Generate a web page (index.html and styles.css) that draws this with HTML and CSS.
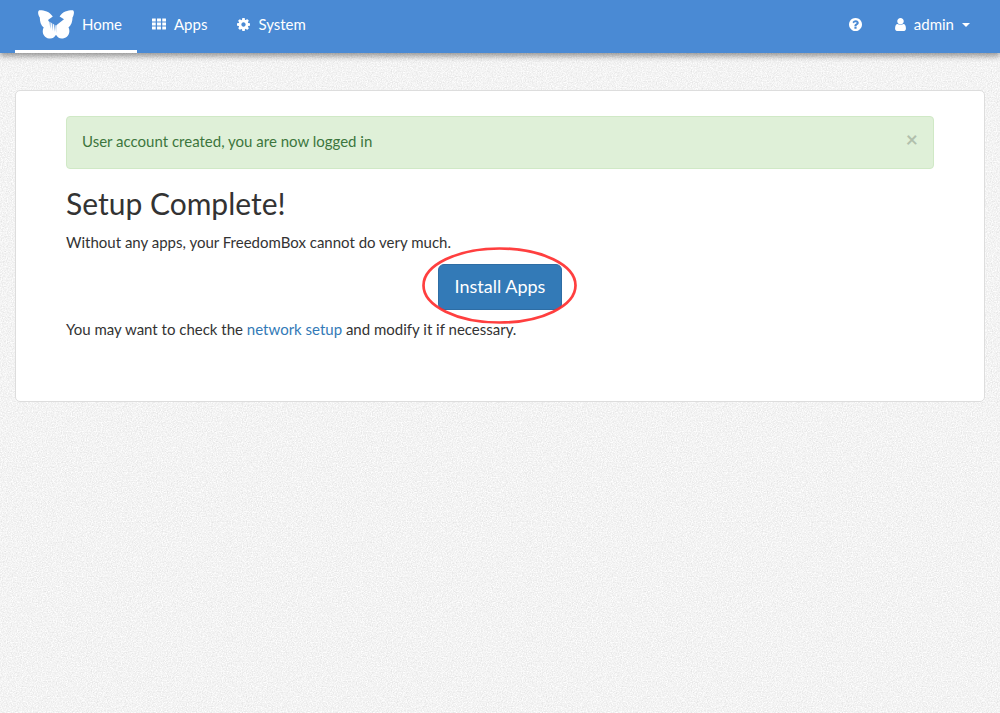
FILE: index.html
```html
<!DOCTYPE html>
<html lang="en">
<head>
<meta charset="utf-8">
<meta name="viewport" content="width=device-width, initial-scale=1">
<title>Setup Complete! - FreedomBox</title>
<link rel="stylesheet" href="styles.css">
</head>
<body>
<nav class="navbar">
  <div class="nav-group">
    <a class="nav-link brand active" href="#">
      <svg class="logo" viewBox="0 0 36 29" aria-hidden="true">
        <path fill="#fff" d="M1.200 .2C5 0 11.500 1 14.800 6.600L10.300 9.800L10.300 11L18 15.500L26 9.300L21.600 6.600C24.500 1 31 0 35 .2C36.800 1.500 35.700 5.500 34.500 7.600C34.400 11.500 33.400 15.500 30.500 17.300C32.600 21.500 31 27.500 25 28.500C21.500 29 19.500 27.400 18 24.800C16.500 27.400 14.500 29 11 28.500C5 27.500 3.500 21.500 5.700 17.300C2.700 15.500 2 11.500 1.800 7.600C.3 5.500-.8 1.500 1.200 .2Z"/>
        <path fill="#4a8ad4" d="M11.400 10.500h1.100L12.300 19zM13.600 11.500h1.100L14.500 21zM15.700 12.500h1.100L16.500 22zM17.500 14h.8L18.100 23z"/>
      </svg>
      <span>Home</span>
    </a>
    <a class="nav-link" href="#">
      <svg class="icon-th" viewBox="0 0 15 12" aria-hidden="true"><path fill="#fff" d="M.5 0h3.500v3.300H0V.5zM5.400 0h4.200v3.300H5.400zM11 0h3.500l.5.5v2.800h-4zM0 4.400h4v3.300H0zM5.400 4.400h4.200v3.300H5.400zM11 4.400h4v3.300h-4zM0 8.700h4V12H.5L0 11.500zM5.400 8.700h4.200V12H5.400zM11 8.700h4v2.800l-.5.500H11z"/></svg>
      <span>Apps</span>
    </a>
    <a class="nav-link" href="#">
      <svg class="icon" viewBox="128 128 1536 1536" aria-hidden="true"><path fill="#fff" d="M1152 896q0-106-75-181t-181-75-181 75-75 181 75 181 181 75 181-75 75-181zm512-109v222q0 12-8 23t-20 13l-185 28q-19 54-39 91 35 50 107 138 10 12 10 25t-9 23q-27 37-99 108t-94 71q-12 0-26-9l-138-108q-44 23-91 38-16 136-29 186-7 28-36 28h-222q-14 0-24.500-8.500t-11.500-21.500l-28-184q-49-16-90-37l-141 107q-10 9-25 9-14 0-25-11-126-114-165-168-7-10-7-23 0-12 8-23 15-21 51-66.500t54-70.500q-27-50-41-99l-183-27q-13-2-21-12.500t-8-23.500v-222q0-12 8-23t19-13l186-28q14-46 39-92-40-57-107-138-10-12-10-24 0-10 9-23 26-36 98.500-107.500t94.500-71.500q13 0 26 10l138 107q44-23 91-38 16-136 29-186 7-28 36-28h222q14 0 24.500 8.500t11.500 21.500l28 184q49 16 90 37l142-107q9-9 24-9 13 0 25 10 129 119 165 170 7 8 7 22 0 12-8 23-15 21-51 66.500t-54 70.500q26 50 41 98l183 28q13 2 21 12.500t8 23.500z"/></svg>
      <span>System</span>
    </a>
  </div>
  <div class="nav-group">
    <a class="nav-link" href="#" aria-label="Help">
      <svg class="icon" viewBox="128 128 1536 1536" aria-hidden="true"><path fill="#fff" d="M1024 1376v-192q0-14-9-23t-23-9h-192q-14 0-23 9t-9 23v192q0 14 9 23t23 9h192q14 0 23-9t9-23zm256-672q0-88-55.500-163t-138.500-116-170-41q-243 0-371 213-15 24 8 42l132 100q7 6 19 6 16 0 25-12 53-68 86-92 34-24 86-24 48 0 85.500 26t37.500 59q0 38-20 61t-68 45q-63 28-115.500 86.500t-52.500 125.500v36q0 14 9 23t23 9h192q14 0 23-9t9-23q0-19 21.500-49.500t54.500-49.500q32-18 49-28.500t46-35 44.500-48 28-60.500 12.500-81zm384 192q0 209-103 385.500t-279.500 279.500-385.500 103-385.500-103-279.500-279.500-103-385.500 103-385.500 279.500-279.500 385.500-103 385.500 103 279.500 279.500 103 385.500z"/></svg>
    </a>
    <button class="nav-link user" type="button" aria-haspopup="true">
      <svg class="icon-user" viewBox="256 128 1280 1536" aria-hidden="true"><path fill="#fff" d="M1536 1399q0 109-62.500 187t-150.500 78h-854q-88 0-150.500-78t-62.500-187q0-85 8.500-160.500t31.500-152 58.500-131 94-89 134.500-34.500q131 128 313 128t313-128q76 0 134.500 34.500t94 89 58.500 131 31.500 152 8.500 160.500zm-256-887q0 159-112.500 271.500t-271.500 112.500-271.500-112.500-112.500-271.500 112.500-271.500 271.500-112.500 271.500 112.500 112.500 271.500z"/></svg>
      <span>admin</span>
      <span class="caret"></span>
    </button>
  </div>
</nav>
<main class="card">
  <div class="alert" role="alert">
    <span>User account created, you are now logged in</span>
    <button class="close" type="button" aria-label="Close">×</button>
  </div>
  <h2 class="title">Setup Complete!</h2>
  <p class="text">Without any apps, your FreedomBox cannot do very much.</p>
  <div class="action">
    <a class="button" href="#">Install Apps</a>
    <svg class="ring" viewBox="0 0 156 80" aria-hidden="true"><ellipse cx="77.500" cy="38.500" rx="76" ry="37" fill="none" stroke="#ff2a2a" stroke-opacity=".9" stroke-width="2.700"/></svg>
  </div>
  <p class="text">You may want to check the <a class="link" href="#">network setup</a> and modify it if necessary.</p>
</main>
</body>
</html>
```
FILE: styles.css
```css
* {
  box-sizing: border-box;
}

body {
  margin: 0;
  min-height: 100vh;
  color: #333;
  font: 15px/21px Lato, sans-serif;
  background-color: #f3f3f3;
  background-image: url("data:image/svg+xml,%3Csvg xmlns='http://www.w3.org/2000/svg' width='300' height='300'%3E%3Cfilter id='n' x='0' y='0' width='100%25' height='100%25' color-interpolation-filters='sRGB'%3E%3CfeTurbulence type='fractalNoise' baseFrequency='.8' numOctaves='3' stitchTiles='stitch'/%3E%3CfeColorMatrix values='.16 0 0 0 .873 .16 0 0 0 .873 .16 0 0 0 .873 0 0 0 0 1'/%3E%3C/filter%3E%3Crect width='300' height='300' filter='url(%23n)'/%3E%3C/svg%3E");
}

.navbar {
  display: flex;
  justify-content: space-between;
  height: 53px;
  padding: 0 15px;
  background: #4a8ad4;
  box-shadow: 0 3px 6px rgba(0, 0, 0, .4);
}

.nav-group {
  display: flex;
}

.nav-link {
  display: flex;
  align-items: center;
  gap: 8px;
  padding: 0 15px 2px;
  border: 0;
  border-bottom: 3px solid transparent;
  background: none;
  color: #fff;
  font: inherit;
  text-decoration: none;
  cursor: pointer;
}

.brand {
  padding-left: 23px;
}

.active {
  border-bottom-color: #fff;
}

.logo {
  width: 36px;
  height: 29px;
}

.icon {
  width: 13px;
  height: 13px;
}

.icon-th {
  width: 14px;
  height: 12px;
}

.icon-user {
  width: 11px;
  height: 13px;
}

.user {
  padding-left: 18px;
}

.caret {
  margin-top: 2px;
  border: 4px solid transparent;
  border-top-color: #fff;
  border-bottom: 0;
}

.card {
  margin: 37px 15px;
  padding: 25px 50px;
  border: 1px solid #ddd;
  border-radius: 5px;
  background: #fff;
  padding-bottom: 50px;
}

.alert {
  display: flex;
  justify-content: space-between;
  margin-bottom: 17px;
  padding: 14px 15px 16px;
  border: 1px solid #d0e9c6;
  border-radius: 4px;
  background: #dff0d8;
  color: #3c763d;
}

.close {
  height: 16px;
  padding: 0;
  border: 0;
  background: none;
  color: #000;
  font: bold 21px/16px Lato, sans-serif;
  opacity: .2;
  cursor: pointer;
}

.title {
  margin: 0 0 11px;
  font-size: 30px;
  font-weight: 400;
  line-height: 35px;
}

.text {
  margin: 0 0 11px;
}

.action {
  position: relative;
  display: flex;
  justify-content: center;
  margin-bottom: 9px;
}

.button {
  padding: 9px 16px 11px;
  border: 1px solid #2e6da4;
  border-radius: 6px;
  background: #337ab7;
  color: #fff;
  font-size: 18px;
  line-height: 24px;
  text-decoration: none;
}

.ring {
  position: absolute;
  top: 50%;
  left: 50%;
  width: 156px;
  height: 80px;
  transform: translate(-50%, -50%);
  pointer-events: none;
}

.link {
  color: #337ab7;
  text-decoration: none;
}
```
